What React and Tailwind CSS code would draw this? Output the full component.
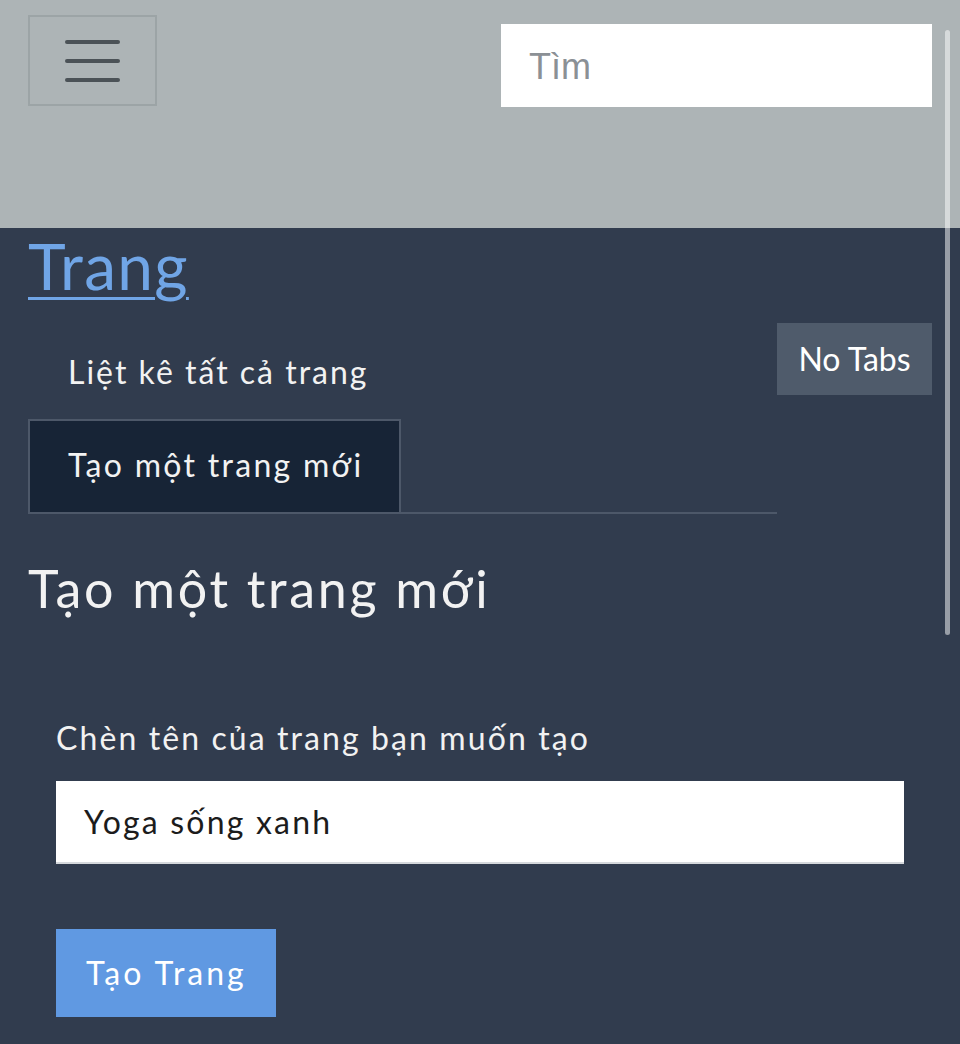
import React from "react";

export default function App() {
  return (
    <div
      className="relative w-[960px] min-h-[1044px] bg-[#313c4e] text-[#f2f2f2]"
      style={{ fontFamily: "Lato, 'Noto Sans', sans-serif" }}
    >
      <header className="h-[228px] bg-[#adb4b6] px-[28px] pt-[15px] flex justify-between items-start">
        <button className="w-[129px] h-[91px] border-2 border-[#9ca4a6] flex flex-col items-center justify-center gap-[15px]">
          <span className="block w-[55px] h-[4px] rounded-full bg-[#4b5257]" />
          <span className="block w-[55px] h-[4px] rounded-full bg-[#4b5257]" />
          <span className="block w-[55px] h-[4px] rounded-full bg-[#4b5257]" />
        </button>
        <div className="mt-[9px] w-[431px] h-[83px] bg-white flex items-center px-[28px] pt-[3px]">
          <span
            className="text-[36px] text-[#8b9095] leading-none"
            style={{ fontFamily: "'Liberation Sans', Arial, sans-serif" }}
          >
            Tìm
          </span>
        </div>
      </header>

      <main className="px-[28px]">
        <h1 className="text-[64px] leading-[1.2] tracking-[1.3px]">
          <a className="text-[#70a5e6] underline decoration-[3px] underline-offset-[7px]">Trang</a>
        </h1>

        <div className="mt-[18px] flex items-start">
          <ul className="flex-1 border-b-2 border-[#4d5869] text-[32px] leading-[38px]">
            <li className="pl-[40px] pt-[30px] pb-[28px] tracking-[2px]">Liệt kê tất cả trang</li>
            <li className="-mb-[2px]">
              <span className="inline-block bg-[#172436] border-2 border-[#4d5869] pl-[38px] pr-[36px] pt-[25px] pb-[28px] tracking-[2.3px]">
                Tạo một trang mới
              </span>
            </li>
          </ul>
          <button className="w-[155px] h-[72px] bg-[#4f5b6b] text-white text-[32px] leading-[38px] flex items-center justify-center">
            No Tabs
          </button>
        </div>

        <h2 className="mt-[43px] text-[52px] leading-[1.2] tracking-[2.7px] text-[#f2f2f2]">Tạo một trang mới</h2>

        <div className="px-[28px] mt-[100px]">
          <label className="block text-[32px] leading-[38px] tracking-[2.1px]">Chèn tên của trang bạn muốn tạo</label>
          <div className="mt-[24px] h-[83px] bg-white border-b-2 border-[#d5d8dc] flex items-center px-[28px] text-[32px] tracking-[2.2px] text-[#1c1c1c]">
            Yoga sống xanh
          </div>
          <button className="mt-[65px] w-[220px] h-[88px] bg-[#6099e2] text-white text-[32px] tracking-[3px] flex items-center pl-[30px]">
            Tạo Trang
          </button>
        </div>
      </main>

      <div className="absolute left-[945px] top-[30px] w-[5px] h-[605px] rounded-full bg-white/50" />
    </div>
  );
}
